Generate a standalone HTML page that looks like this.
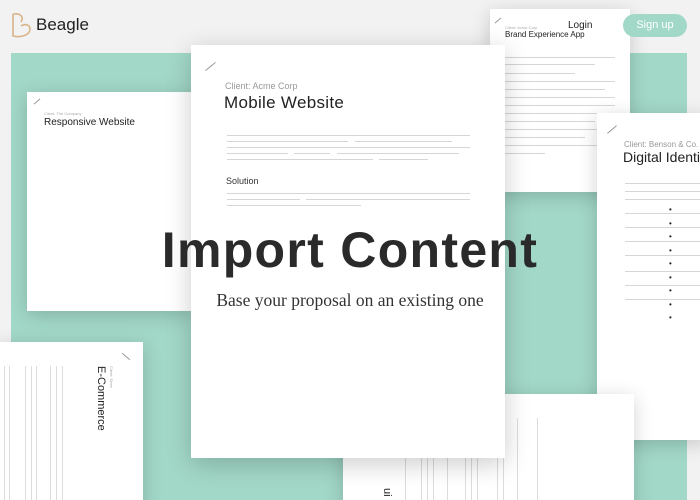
<!DOCTYPE html>
<html><head><style>
*{margin:0;padding:0;box-sizing:border-box}
html{overflow:hidden;width:700px;height:500px}
body{width:700px;height:500px;overflow:hidden;background:#f2f2f2;position:relative;font-family:"Liberation Sans",sans-serif}
.a{position:absolute}
.card{position:absolute;background:#fff;box-shadow:0 4px 18px rgba(0,0,0,.18)}
.l{position:absolute;height:1px;background:#d6d6d6}
.v{position:absolute;width:1px;background:#dcdcdc}
.sl{position:absolute;width:14px;height:1px;background:#999;transform:rotate(-40deg)}
</style></head><body>
<div class="a" style="left:11px;top:53px;width:676px;height:447px;background:#a2d8c8"></div>

<svg class="a" style="left:10px;top:12px" width="24" height="28" viewBox="0 0 24 28"><path d="M3 2v22c8 2 17-1 17-7 0-4-5-6-9-3M3 2c8-1 11 3 8 8" fill="none" stroke="#d9b48a" stroke-width="1.6"/></svg>
<div class="a" style="left:36px;top:15px;font-size:17px;color:#222">Beagle</div>

<div class="card" style="left:490px;top:9px;width:140px;height:183px">
<div class="sl" style="left:4px;top:11px;width:8px"></div>
<div class="a" style="left:15px;top:16px;font-size:4px;color:#aaa">Client: Acme Corp</div>
<div class="a" style="left:78px;top:11px;font-size:10px;color:#222">Login</div>
<div class="a" style="left:15px;top:21px;font-size:8px;color:#222">Brand Experience App</div>
<div class="l" style="left:15px;top:48px;width:110px"></div><div class="l" style="left:15px;top:55px;width:90px"></div><div class="l" style="left:15px;top:64px;width:70px"></div><div class="l" style="left:15px;top:72px;width:110px"></div><div class="l" style="left:15px;top:80px;width:100px"></div><div class="l" style="left:15px;top:88px;width:110px"></div><div class="l" style="left:15px;top:96px;width:110px"></div><div class="l" style="left:15px;top:104px;width:110px"></div><div class="l" style="left:15px;top:112px;width:90px"></div><div class="l" style="left:15px;top:120px;width:110px"></div><div class="l" style="left:15px;top:128px;width:80px"></div><div class="l" style="left:15px;top:136px;width:110px"></div><div class="l" style="left:15px;top:144px;width:40px"></div>
</div>

<div class="a" style="left:623px;top:14px;width:64px;height:23px;border-radius:12px;background:#a2d8c8;color:#fff;font-size:11px;text-align:center;line-height:23px;z-index:5">Sign up</div>

<div class="card" style="left:27px;top:92px;width:167px;height:219px">
<div class="sl" style="left:6px;top:9px;width:8px"></div>
<div class="a" style="left:17px;top:19px;font-size:4px;color:#aaa">Client: The Company</div>
<div class="a" style="left:17px;top:25px;font-size:10px;color:#222">Responsive Website</div>
</div>

<div class="card" style="left:597px;top:113px;width:110px;height:327px">
<div class="sl" style="left:9px;top:16px;width:12px"></div>
<div class="a" style="left:27px;top:27px;font-size:8px;color:#999">Client: Benson &amp; Co.</div>
<div class="a" style="left:26px;top:36px;font-size:14px;color:#222;white-space:nowrap">Digital Identity</div>
<div class="l" style="left:28px;top:70px;width:80px"></div><div class="l" style="left:28px;top:78px;width:80px"></div><div class="l" style="left:28px;top:86px;width:80px"></div><div class="l" style="left:28px;top:100px;width:80px"></div><div class="l" style="left:28px;top:114px;width:80px"></div><div class="l" style="left:28px;top:128px;width:80px"></div><div class="l" style="left:28px;top:142px;width:80px"></div><div class="l" style="left:28px;top:158px;width:80px"></div><div class="l" style="left:28px;top:172px;width:80px"></div><div class="l" style="left:28px;top:186px;width:80px"></div>
<div class="a" style="left:72px;top:90px;font-size:8px;line-height:13.5px;color:#222">•<br>•<br>•<br>•<br>•<br>•<br>•<br>•<br>•</div>
</div>

<div class="card" style="left:-5px;top:342px;width:148px;height:170px">
<div class="sl" style="left:126px;top:14px;width:10px;transform:rotate(40deg)"></div>
<div class="a" style="left:100px;top:24px;font-size:11px;color:#222;writing-mode:vertical-rl;white-space:nowrap">E-Commerce</div>
<div class="a" style="left:114px;top:24px;font-size:4px;color:#aaa;writing-mode:vertical-rl">Client: Ebee</div>
<div class="v" style="left:9px;top:24px;height:146px"></div><div class="v" style="left:14px;top:24px;height:146px"></div><div class="v" style="left:30px;top:24px;height:146px"></div><div class="v" style="left:36px;top:24px;height:146px"></div><div class="v" style="left:41px;top:24px;height:146px"></div><div class="v" style="left:55px;top:24px;height:146px"></div><div class="v" style="left:61px;top:24px;height:146px"></div><div class="v" style="left:67px;top:24px;height:146px"></div>
</div>

<div class="card" style="left:343px;top:394px;width:291px;height:120px">
<div class="a" style="left:38px;top:94px;font-size:11px;color:#222;writing-mode:vertical-rl">ui</div>
<div class="v" style="left:62px;top:24px;height:96px"></div><div class="v" style="left:78px;top:24px;height:96px"></div><div class="v" style="left:84px;top:24px;height:96px"></div><div class="v" style="left:90px;top:24px;height:96px"></div><div class="v" style="left:104px;top:24px;height:96px"></div><div class="v" style="left:122px;top:24px;height:96px"></div><div class="v" style="left:128px;top:24px;height:96px"></div><div class="v" style="left:134px;top:24px;height:96px"></div><div class="v" style="left:154px;top:24px;height:96px"></div><div class="v" style="left:160px;top:24px;height:96px"></div><div class="v" style="left:174px;top:24px;height:96px"></div><div class="v" style="left:194px;top:24px;height:96px"></div>
</div>

<div class="card" style="left:191px;top:45px;width:314px;height:413px;box-shadow:0 6px 24px rgba(0,0,0,.2)">
<div class="sl" style="left:13px;top:21px;width:13px"></div>
<div class="a" style="left:34px;top:36px;font-size:9px;color:#999">Client: Acme Corp</div>
<div class="a" style="left:33px;top:48px;font-size:17px;color:#222;letter-spacing:.3px">Mobile Website</div>
<div class="l" style="left:36px;top:90px;width:243px"></div><div class="l" style="left:36px;top:96px;width:121px"></div><div class="l" style="left:164px;top:96px;width:97px"></div><div class="l" style="left:36px;top:102px;width:243px"></div><div class="l" style="left:36px;top:108px;width:61px"></div><div class="l" style="left:103px;top:108px;width:36px"></div><div class="l" style="left:146px;top:108px;width:122px"></div><div class="l" style="left:36px;top:114px;width:146px"></div><div class="l" style="left:188px;top:114px;width:49px"></div>
<div class="a" style="left:35px;top:131px;font-size:9px;color:#333">Solution</div>
<div class="l" style="left:36px;top:148px;width:243px"></div><div class="l" style="left:36px;top:154px;width:73px"></div><div class="l" style="left:115px;top:154px;width:164px"></div><div class="l" style="left:36px;top:160px;width:134px"></div>
</div>

<div class="a" style="left:100px;top:221px;width:500px;text-align:center;font-size:50px;font-weight:bold;color:#2a2a2a;letter-spacing:1.3px">Import Content</div>
<div class="a" style="left:150px;top:290px;width:400px;text-align:center;font-family:'Liberation Serif',serif;font-size:17.5px;color:#333">Base your proposal on an existing one</div>
</body></html>
